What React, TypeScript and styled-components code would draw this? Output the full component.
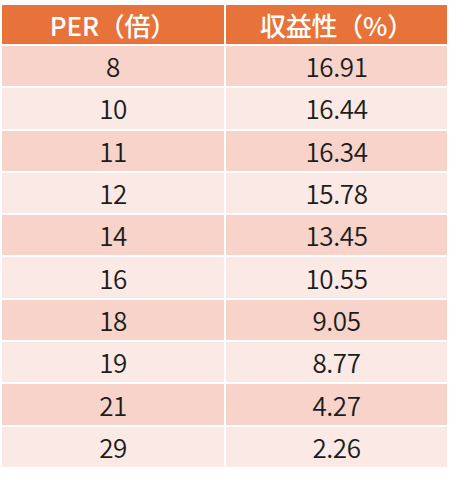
import { Fragment } from 'react';
import styled, { createGlobalStyle } from 'styled-components';

const rows: [string, string][] = [
  ['8', '16.91'],
  ['10', '16.44'],
  ['11', '16.34'],
  ['12', '15.78'],
  ['14', '13.45'],
  ['16', '10.55'],
  ['18', '9.05'],
  ['19', '8.77'],
  ['21', '4.27'],
  ['29', '2.26'],
];

const GlobalStyle = createGlobalStyle`
  html, body {
    margin: 0;
    background: #ffffff;
  }
  body {
    font-family: 'Noto Sans CJK JP', 'Noto Sans', sans-serif;
  }
`;

const Table = styled.div`
  display: grid;
  grid-template-columns: 222px 221px;
  grid-template-rows: 39px repeat(10, 40.3px);
  column-gap: 2px;
  row-gap: 2px;
  width: 445px;
  margin: 5px 0 0 2px;
`;

const HeadCell = styled.div`
  display: flex;
  align-items: center;
  justify-content: center;
  background: #e8733a;
  color: #ffffff;
  font-size: 26px;
  font-weight: 500;
  letter-spacing: -0.2px;
  line-height: 1;
`;

const Cell = styled.div<{ $odd: boolean }>`
  display: flex;
  align-items: center;
  justify-content: center;
  background: ${p => (p.$odd ? '#f7d3ca' : '#fbe9e5')};
  color: #1c1c1c;
  font-size: 26px;
  font-weight: 350;
  letter-spacing: -0.4px;
  line-height: 1;
`;

const App = () => {
  return (
    <>
      <GlobalStyle />
      <Table>
        <HeadCell>PER（倍）</HeadCell>
        <HeadCell>収益性（%）</HeadCell>
        {rows.map(([per, yieldPct], i) => (
          <Fragment key={per}>
            <Cell $odd={i % 2 === 0}>{per}</Cell>
            <Cell $odd={i % 2 === 0}>{yieldPct}</Cell>
          </Fragment>
        ))}
      </Table>
    </>
  );
};

export default App;
